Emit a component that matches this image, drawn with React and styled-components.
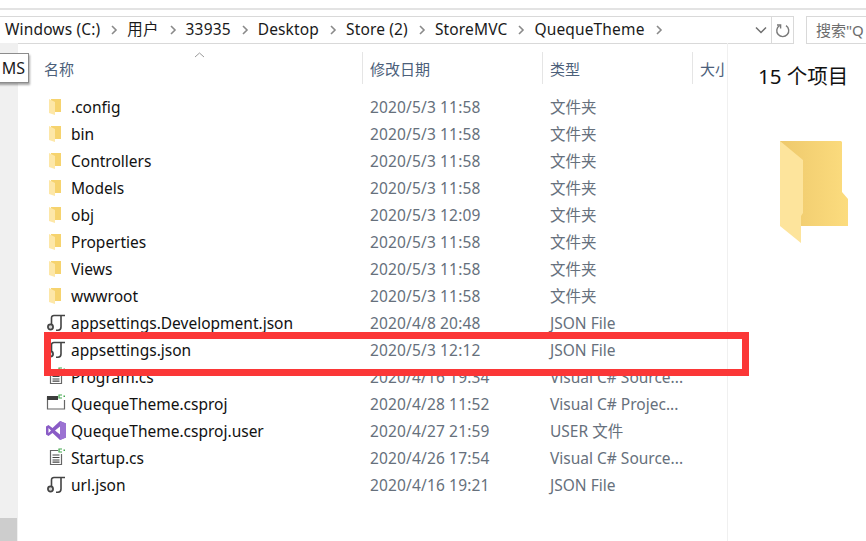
import React from "react";
import styled, { createGlobalStyle } from "styled-components";

const Global = createGlobalStyle`
	html, body {
		margin: 0;
		padding: 0;
		background: #fff;
	}
	body {
		width: 866px;
		height: 541px;
		overflow: hidden;
		font-family: "Noto Sans", "Noto Sans CJK SC", sans-serif;
	}
`;

const Window = styled.div`
	width: 866px;
	height: 541px;
	display: flex;
	flex-direction: column;
	background: #fff;
	overflow: hidden;
	position: relative;
`;

const TopEdge = styled.div`
	height: 8px;
	flex: none;
	border-bottom: 2px solid #e3e3e3;
`;

const Toolbar = styled.div`
	height: 27px;
	flex: none;
	margin-top: 6px;
	display: flex;
	gap: 12px;
`;

const AddressBar = styled.div`
	width: 795px;
	margin-left: -1px;
	flex: none;
	display: flex;
	align-items: center;
	border: 1px solid #d9d9d9;
	box-sizing: border-box;
	height: 28px;
	border-left: none;
	padding-left: 6px;
`;

const Crumb = styled.span`
	font-size: 15.5px;
	letter-spacing: 0.15px;
	line-height: 25px;
	padding-bottom: 2px;
	color: #1a1a1a;
	white-space: nowrap;
`;

const Sep = styled.svg`
	width: 8px;
	height: 10px;
	margin: 0 9px 0 10px;
	flex: none;
`;

const AddressTools = styled.div`
	margin-left: auto;
	display: flex;
	align-items: center;
	height: 100%;
`;

const DropArrow = styled.svg`
	width: 12px;
	height: 8px;
	margin-right: 4px;
`;

const Refresh = styled.div`
	width: 21px;
	height: 100%;
	display: flex;
	align-items: center;
	justify-content: center;
	border-left: 1px solid #d9d9d9;
`;

const SearchBox = styled.div`
	flex: none;
	height: 28px;
	width: 60px;
	box-sizing: border-box;
	border: 1px solid #d9d9d9;
	border-right: none;
	padding-left: 9px;
	font-size: 15px;
	line-height: 26px;
	color: #6d6d6d;
	white-space: nowrap;
	overflow: hidden;
`;

const Body = styled.div`
	flex: 1;
	display: flex;
	min-height: 0;
`;

const NavRail = styled.div`
	width: 18px;
	flex: none;
	background: #f0f0f0;
	display: flex;
	flex-direction: column;
	justify-content: flex-end;
`;

const RailThumb = styled.div`
	height: 23px;
	background: #cdcdcd;
	margin-right: 1px;
`;

const Tip = styled.div`
	position: absolute;
	left: -3px;
	top: 53px;
	width: 32px;
	height: 30px;
	box-sizing: border-box;
	background: #fff;
	border: 1px solid #8c8c8c;
	box-shadow: 1px 2px 2px rgba(0, 0, 0, 0.35);
	font-size: 16px;
	line-height: 28px;
	text-align: right;
	padding-right: 3px;
	color: #1a1a1a;
`;

const ListPane = styled.div`
	width: 708px;
	flex: none;
	border-right: 1px solid #f0f0f0;
	position: relative;
	padding-left: 1px;
`;

const HeaderRow = styled.div`
	display: grid;
	grid-template-columns: 344px 180px 150px 1fr;
	height: 32px;
	margin-top: 9px;
	position: relative;
`;

const HeaderCell = styled.div`
	box-sizing: border-box;
	height: 32px;
	padding-left: ${(p) => p.$pad}px;
	border-right: 1px solid #e5e5e5;
	font-size: 15px;
	line-height: 34px;
	color: #4c607a;
	white-space: nowrap;
	overflow: hidden;
	&:last-child {
		border-right: none;
		margin-right: 2px;
	}
`;

const SortCaret = styled.svg`
	position: absolute;
	left: 175px;
	top: 0;
	width: 11px;
	height: 6px;
`;

const Rows = styled.div`
	margin-top: 9px;
`;

const Row = styled.div`
	display: grid;
	grid-template-columns: 351px 180px 1fr;
	height: 27px;
	align-items: center;
	font-size: 15.5px;
	white-space: nowrap;
`;

const NameCell = styled.div`
	display: flex;
	align-items: center;
	padding-left: 27px;
	color: #111;
`;

const IconSlot = styled.span`
	width: 25px;
	flex: none;
	display: flex;
`;

const MetaCell = styled.div`
	color: #66707c;
`;

const DateCell = styled(MetaCell)`
	letter-spacing: 0.15px;
`;

const Details = styled.div`
	flex: 1;
	padding: 20px 0 0 30px;
	position: relative;
`;

const Count = styled.div`
	font-size: 20.5px;
	line-height: 26px;
	color: #111;
	white-space: nowrap;
`;

const BigFolder = styled.svg`
	display: block;
	width: 68px;
	height: 102px;
	margin: 52px 0 0 22px;
`;

const Highlight = styled.div`
	position: absolute;
	left: 44px;
	top: 332px;
	width: 705px;
	height: 44px;
	box-sizing: border-box;
	border: 7px solid #fb3737;
	pointer-events: none;
`;

const FolderIcon = () => (
	<svg width="16" height="18" viewBox="0 0 16 18">
		<path d="M5 1h10v13H5z" fill="#f6d36e" />
		<path d="M3 1l6 3v13l-6-2z" fill="#fde7a8" />
	</svg>
);

const JsonIcon = () => (
	<svg width="20" height="20" viewBox="0 0 20 20" fill="none">
		<path d="M5.5 11V5C5.5 3.2 6.5 2.5 8 2.5h11" stroke="#444" strokeWidth="1.6" />
		<path d="M15 3v11c0 2-1 3.2-3 3.2h-2" stroke="#444" strokeWidth="1.6" />
		<circle cx="4.5" cy="14" r="2.6" stroke="#444" strokeWidth="1.7" fill="#d4d4d4" />
	</svg>
);

const SourceIcon = () => (
	<svg width="20" height="20" viewBox="0 0 20 20" fill="none">
		<path d="M4.5 2.5h11v14h-11z" fill="#fff" stroke="#666" strokeWidth="1.2" />
		<path d="M6.5 7h7M6.5 9.5h7M6.5 12h7M6.5 14.2h7" stroke="#444" strokeWidth="1.2" />
		<path d="M12 0h8v6h-8z" fill="#fff" />
		<path d="M16 1h-3v3h3" stroke="#45a84f" strokeWidth="1.2" />
		<path d="M17.5 1.5h1.5v1.5h-1.5z" fill="#45a84f" />
	</svg>
);

const ProjectIcon = () => (
	<svg width="20" height="20" viewBox="0 0 20 20" fill="none">
		<path d="M1.5 3h17v12h-17z" fill="#fff" stroke="#666" strokeWidth="1.2" />
		<path d="M1 2h11v4H1z" fill="#3d3d3d" />
		<path d="M12 0h8v6h-8z" fill="#fff" />
		<path d="M16 1h-3v3h3" stroke="#45a84f" strokeWidth="1.2" />
		<path d="M17.5 1.5h1.5v1.5h-1.5z" fill="#45a84f" />
	</svg>
);

const StudioIcon = () => (
	<svg width="20" height="20" viewBox="0 0 20 20">
		<path d="M14 0l6 2.5v14L14 19 6.5 12l-4 3L0 13.5v-8L2.5 4l4 3z" fill="#8a5cc6" />
		<path d="M14 0l6 2.5v14L14 19z" fill="#9b72d2" />
		<path d="M14 5.5v8L9 9.5zM2.5 7v5L5 9.5z" fill="#fff" />
	</svg>
);

const icons = {
	folder: FolderIcon,
	json: JsonIcon,
	source: SourceIcon,
	project: ProjectIcon,
	studio: StudioIcon,
};

const files = [
	[".config", "2020/5/3 11:58", "文件夹", "folder"],
	["bin", "2020/5/3 11:58", "文件夹", "folder"],
	["Controllers", "2020/5/3 11:58", "文件夹", "folder"],
	["Models", "2020/5/3 11:58", "文件夹", "folder"],
	["obj", "2020/5/3 12:09", "文件夹", "folder"],
	["Properties", "2020/5/3 11:58", "文件夹", "folder"],
	["Views", "2020/5/3 11:58", "文件夹", "folder"],
	["wwwroot", "2020/5/3 11:58", "文件夹", "folder"],
	["appsettings.Development.json", "2020/4/8 20:48", "JSON File", "json"],
	["appsettings.json", "2020/5/3 12:12", "JSON File", "json"],
	["Program.cs", "2020/4/16 19:34", "Visual C# Source...", "source"],
	["QuequeTheme.csproj", "2020/4/28 11:52", "Visual C# Projec...", "project"],
	["QuequeTheme.csproj.user", "2020/4/27 21:59", "USER 文件", "studio"],
	["Startup.cs", "2020/4/26 17:54", "Visual C# Source...", "source"],
	["url.json", "2020/4/16 19:21", "JSON File", "json"],
];

const crumbs = ["Windows (C:)", "用户", "33935", "Desktop", "Store (2)", "StoreMVC", "QuequeTheme"];

const Chevron = () => (
	<Sep viewBox="0 0 8 10" fill="none">
		<path d="M2 1l4 4-4 4" stroke="#8a8a8a" strokeWidth="1.6" />
	</Sep>
);

const App = () => (
	<Window>
		<Global />
		<TopEdge />
		<Toolbar>
			<AddressBar>
				{crumbs.map((c) => (
					<React.Fragment key={c}>
						<Crumb>{c}</Crumb>
						<Chevron />
					</React.Fragment>
				))}
				<AddressTools>
					<DropArrow viewBox="0 0 12 8" fill="none">
						<path d="M1 1.5l5 5 5-5" stroke="#6f6f6f" strokeWidth="1.5" />
					</DropArrow>
					<Refresh>
						<svg width="15" height="15" viewBox="0 0 15 15" fill="none">
							<path d="M4.5 2.6A6 6 0 1 0 11 2.6" stroke="#7a7a7a" strokeWidth="1.4" />
							<path d="M2 2h3.6v3.6" stroke="#7a7a7a" strokeWidth="1.4" />
						</svg>
					</Refresh>
				</AddressTools>
			</AddressBar>
			<SearchBox>搜索"Q</SearchBox>
		</Toolbar>
		<Body>
			<NavRail>
				<RailThumb />
			</NavRail>
			<ListPane>
				<HeaderRow>
					<SortCaret viewBox="0 0 11 6" fill="none">
						<path d="M1 5l4.5-4L10 5" stroke="#9a9a9a" strokeWidth="1" />
					</SortCaret>
					<HeaderCell $pad={25}>名称</HeaderCell>
					<HeaderCell $pad={7}>修改日期</HeaderCell>
					<HeaderCell $pad={7}>类型</HeaderCell>
					<HeaderCell $pad={7}>大小</HeaderCell>
				</HeaderRow>
				<Rows>
					{files.map(([name, date, type, icon]) => {
						const Icon = icons[icon];
						return (
							<Row key={name}>
								<NameCell>
									<IconSlot>
										<Icon />
									</IconSlot>
									{name}
								</NameCell>
								<DateCell>{date}</DateCell>
								<MetaCell>{type}</MetaCell>
							</Row>
						);
					})}
				</Rows>
			</ListPane>
			<Details>
				<Count>15 个项目</Count>
				<BigFolder viewBox="0 0 68 102">
					<defs>
						<linearGradient id="back" x1="0" x2="1" y1="0" y2="0">
							<stop offset="0" stopColor="#eec96c" />
							<stop offset="1" stopColor="#fcdc7e" />
						</linearGradient>
					</defs>
					<path d="M0 0h61l1 1v50l6 7v27H0z" fill="url(#back)" />
					<path d="M0 0l23 19v53l-2 3v27L0 85z" fill="#fde49c" />
				</BigFolder>
			</Details>
		</Body>
		<Tip>MS</Tip>
		<Highlight />
	</Window>
);

export default App;
